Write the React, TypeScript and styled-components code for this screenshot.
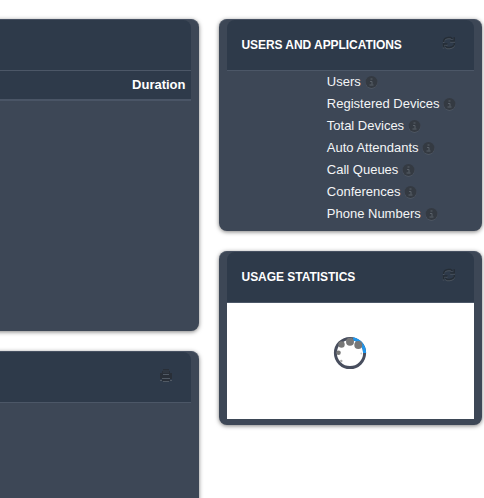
import React from "react";
import styled, { createGlobalStyle } from "styled-components";

const GlobalStyle = createGlobalStyle`
  * { box-sizing: border-box; }
  body {
    margin: 0;
    background: #fff;
    overflow: hidden;
    font-family: "Liberation Sans", Arial, sans-serif;
  }
`;

const Dashboard = styled.main`
  display: grid;
  grid-template-columns: 199px 263px;
  column-gap: 20px;
  height: 498px;
  padding-top: 19px;
  overflow: hidden;
`;

const Column = styled.div`
  display: flex;
  flex-direction: column;
  gap: 20px;
`;

const Panel = styled.section<{ $height: number; $cut?: boolean }>`
  flex: none;
  height: ${(p) => p.$height}px;
  margin-left: ${(p) => (p.$cut ? -16 : 0)}px;
  padding: 0 8px;
  border-top: 1px solid #465061;
  border-radius: 8px;
  background: #3d4756;
  box-shadow: 0 1px 4px rgba(0, 0, 0, 0.5);
`;

const Header = styled.header`
  display: flex;
  align-items: center;
  justify-content: space-between;
  height: 51px;
  padding: 0 18px 0 14.5px;
  border-bottom: 1px solid #4c5767;
  border-radius: 8px 8px 0 0;
  background: #2e3a4a;
`;

const Title = styled.h2<{ $spacing?: number }>`
  margin: 0;
  color: #fff;
  font-size: 12px;
  font-weight: bold;
  letter-spacing: ${(p) => p.$spacing ?? 0}px;
  line-height: 18px;
  white-space: nowrap;
`;

const HeaderIcon = styled.svg`
  flex: none;
  width: 14px;
  height: 16px;
  margin-left: auto;
  margin-top: -4px;
`;

const TableHead = styled.div`
  height: 30px;
  margin-left: -8px;
  padding-right: 5.5px;
  border-bottom: 2px solid #4a5566;
  background: #2e3a4a;
  color: #fff;
  font-size: 13px;
  font-weight: bold;
  line-height: 28px;
  text-align: right;
`;

const StatList = styled.ul`
  margin: 0;
  padding: 0 0 0 99.8px;
  list-style: none;
`;

const Stat = styled.li`
  display: flex;
  align-items: center;
  gap: 3.8px;
  height: 22px;
  color: #f4f5f6;
  font-size: 13px;
  line-height: 22px;
  white-space: nowrap;
`;

const SmallIcon = styled.svg`
  flex: none;
  width: 13px;
  height: 14px;
`;

const ChartArea = styled.div`
  display: flex;
  justify-content: center;
  height: 116px;
  padding: 33px 1px 0 0;
  background: #fff;
`;

const Spinner = styled.svg`
  width: 34px;
  height: 34px;
`;

const refreshStrokes = (
  <>
    <path d="M1.7 7.1V5.8Q2.3 2.7 6.2 2.4H8.5L10.5 3.9" />
    <path d="M12.2 2.2V6H8.2" />
    <path d="M12.3 8.1V9.4Q11.5 12.3 7.8 12.5H5.2L3.2 11.1" />
    <path d="M1.5 12.6V9H5.5" />
  </>
);

const RefreshIcon = () => (
  <HeaderIcon viewBox="0 0 14 16" fill="none" strokeWidth="1.5">
    <g stroke="#4a535e" transform="translate(0 1)">{refreshStrokes}</g>
    <g stroke="#252d36">{refreshStrokes}</g>
  </HeaderIcon>
);

const PrintIcon = () => (
  <HeaderIcon viewBox="0 0 14 16" shapeRendering="crispEdges">
    <path d="M4 2H10V4H11V6H13V12H11V14H3V12H1V6H3V4H4Z" fill="#292f38" />
    <path d="M4 3H10V6H4Z" fill="#303741" />
    <path d="M4 7H10V8H4ZM3 11H11V12H3ZM4 14H10V15H4ZM1 13H3V14H1ZM11 13H13V14H11Z" fill="#515a65" />
  </HeaderIcon>
);

const InfoIcon = () => (
  <SmallIcon viewBox="0 0 13 14">
    <circle cx="6.5" cy="7.7" r="6" fill="#525a66" />
    <circle cx="6.5" cy="7" r="6" fill="#343a42" />
    <path d="M5.5 4H7.5M5 6.5H7V9.5M4.5 10H8.5" fill="none" stroke="#596069" />
  </SmallIcon>
);

const stats = [
  "Users",
  "Registered Devices",
  "Total Devices",
  "Auto Attendants",
  "Call Queues",
  "Conferences",
  "Phone Numbers",
];

export default function App() {
  return (
    <>
      <GlobalStyle />
      <Dashboard>
        <Column>
          <Panel $height={312} $cut>
            <Header />
            <TableHead>Duration</TableHead>
          </Panel>
          <Panel $height={180} $cut>
            <Header>
              <PrintIcon />
            </Header>
          </Panel>
        </Column>
        <Column>
          <Panel $height={212}>
            <Header>
              <Title $spacing={-0.06}>USERS AND APPLICATIONS</Title>
              <RefreshIcon />
            </Header>
            <StatList>
              {stats.map((label) => (
                <Stat key={label}>
                  {label}
                  <InfoIcon />
                </Stat>
              ))}
            </StatList>
          </Panel>
          <Panel $height={174}>
            <Header>
              <Title $spacing={-0.03}>USAGE STATISTICS</Title>
              <RefreshIcon />
            </Header>
            <ChartArea>
              <Spinner viewBox="0 0 34 34">
                <circle cx="17" cy="17" r="14.6" fill="none" stroke="#484e5e" strokeWidth="3" />
                <path d="M20 2.7A14.6 14.6 0 0 1 31.6 17" fill="none" stroke="#1e96ee" strokeWidth="3" />
                <g fill="#777">
                  <circle cx="17" cy="5.8" r="4" />
                  <circle cx="25.3" cy="9" r="4" />
                  <circle cx="8.5" cy="8.5" r="3.2" />
                  <circle cx="5.5" cy="16.7" r="2.3" />
                  <circle cx="8.3" cy="25" r="1.2" fill="#aaa" />
                  <circle cx="28.3" cy="17.5" r="0.9" fill="#ccc" />
                </g>
              </Spinner>
            </ChartArea>
          </Panel>
        </Column>
      </Dashboard>
    </>
  );
}
